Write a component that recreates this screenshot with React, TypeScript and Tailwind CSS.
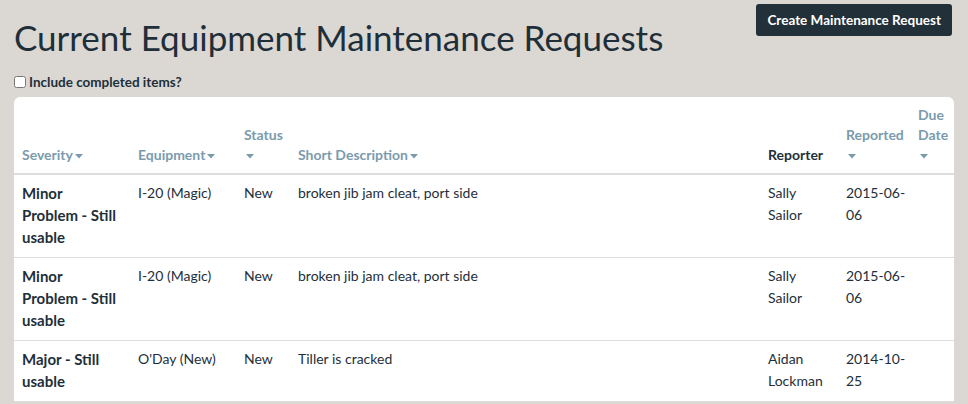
import React from 'react';

interface Request {
  severity: string;
  equipment: string;
  status: string;
  description: string;
  reporter: string;
  reported: [string, string];
  due: string;
}

const requests: Request[] = [
  { severity: 'Minor Problem - Still usable', equipment: 'I-20 (Magic)', status: 'New', description: 'broken jib jam cleat, port side', reporter: 'Sally Sailor', reported: ['2015-06-', '06'], due: '' },
  { severity: 'Minor Problem - Still usable', equipment: 'I-20 (Magic)', status: 'New', description: 'broken jib jam cleat, port side', reporter: 'Sally Sailor', reported: ['2015-06-', '06'], due: '' },
  { severity: 'Major - Still usable', equipment: "O'Day (New)", status: 'New', description: 'Tiller is cracked', reporter: 'Aidan Lockman', reported: ['2014-10-', '25'], due: '' },
];

function Caret() {
  return (
    <svg width="8" height="5" viewBox="0 0 8 5" className="inline-block ml-[2px] align-middle">
      <path d="M0 0 L8 0 L4 4.5 Z" fill="currentColor" />
    </svg>
  );
}

function SortHeader({ label, width }: { label: string; width: string }) {
  return (
    <th className={`${width} px-2 py-2 text-left align-bottom font-bold text-[#7b9bad] leading-[20px]`}>
      <span>{label}</span>
      <Caret />
    </th>
  );
}

export default function App() {
  return (
    <div className="min-h-screen bg-[#dbd8d3] px-[14px] text-[#1e2f3a] font-['Lato',sans-serif] text-[14px]">
      <div className="flex items-start justify-between">
        <h1 className="mt-[15px] text-[35px] leading-[44px] font-normal text-[#1e2f3a]">
          Current Equipment Maintenance Requests
        </h1>
        <button className="mt-[4px] mr-[2px] h-[32px] px-[11px] rounded-[3px] bg-[#22303a] text-white font-bold text-[13.5px]">
          Create Maintenance Request
        </button>
      </div>

      <label className="mt-[13px] h-[20px] flex items-center gap-[3px] text-[13.5px] font-bold text-[#1e2f3a]">
        <input type="checkbox" className="w-[12px] h-[12px] m-0" />
        Include completed items?
      </label>

      <div className="mt-[5px] bg-white rounded-t-[6px] overflow-hidden">
        <table className="w-full table-fixed border-collapse">
          <thead>
            <tr className="border-b-2 border-[#dddddd]">
              <SortHeader label="Severity" width="w-[116px]" />
              <SortHeader label="Equipment" width="w-[106px]" />
              <SortHeader label="Status" width="w-[54px]" />
              <SortHeader label="Short Description" width="w-[470px]" />
              <th className="w-[78px] px-2 py-2 text-left align-bottom font-bold text-[#1e2f3a] leading-[20px]">
                Reporter
              </th>
              <SortHeader label="Reported" width="w-[72px]" />
              <SortHeader label="Due Date" width="w-[44px]" />
            </tr>
          </thead>
          <tbody>
            {requests.map((r, i) => (
              <tr key={i} className="border-b border-[#dddddd] align-top leading-[22px] text-[#1e2f3a]">
                <td className="pl-2 pr-[13px] pt-[7px] pb-[9px] font-bold text-[15px]">{r.severity}</td>
                <td className="px-2 pt-[7px] pb-[9px]">{r.equipment}</td>
                <td className="px-2 pt-[7px] pb-[9px]">{r.status}</td>
                <td className="px-2 pt-[7px] pb-[9px]">{r.description}</td>
                <td className="px-2 pt-[7px] pb-[9px]">{r.reporter}</td>
                <td className="px-2 pt-[7px] pb-[9px]">
                  <span className="whitespace-nowrap">{r.reported[0]}</span>
                  <wbr />
                  <span className="whitespace-nowrap">{r.reported[1]}</span>
                </td>
                <td className="px-2 pt-[7px] pb-[9px]">{r.due}</td>
              </tr>
            ))}
          </tbody>
        </table>
      </div>
    </div>
  );
}
